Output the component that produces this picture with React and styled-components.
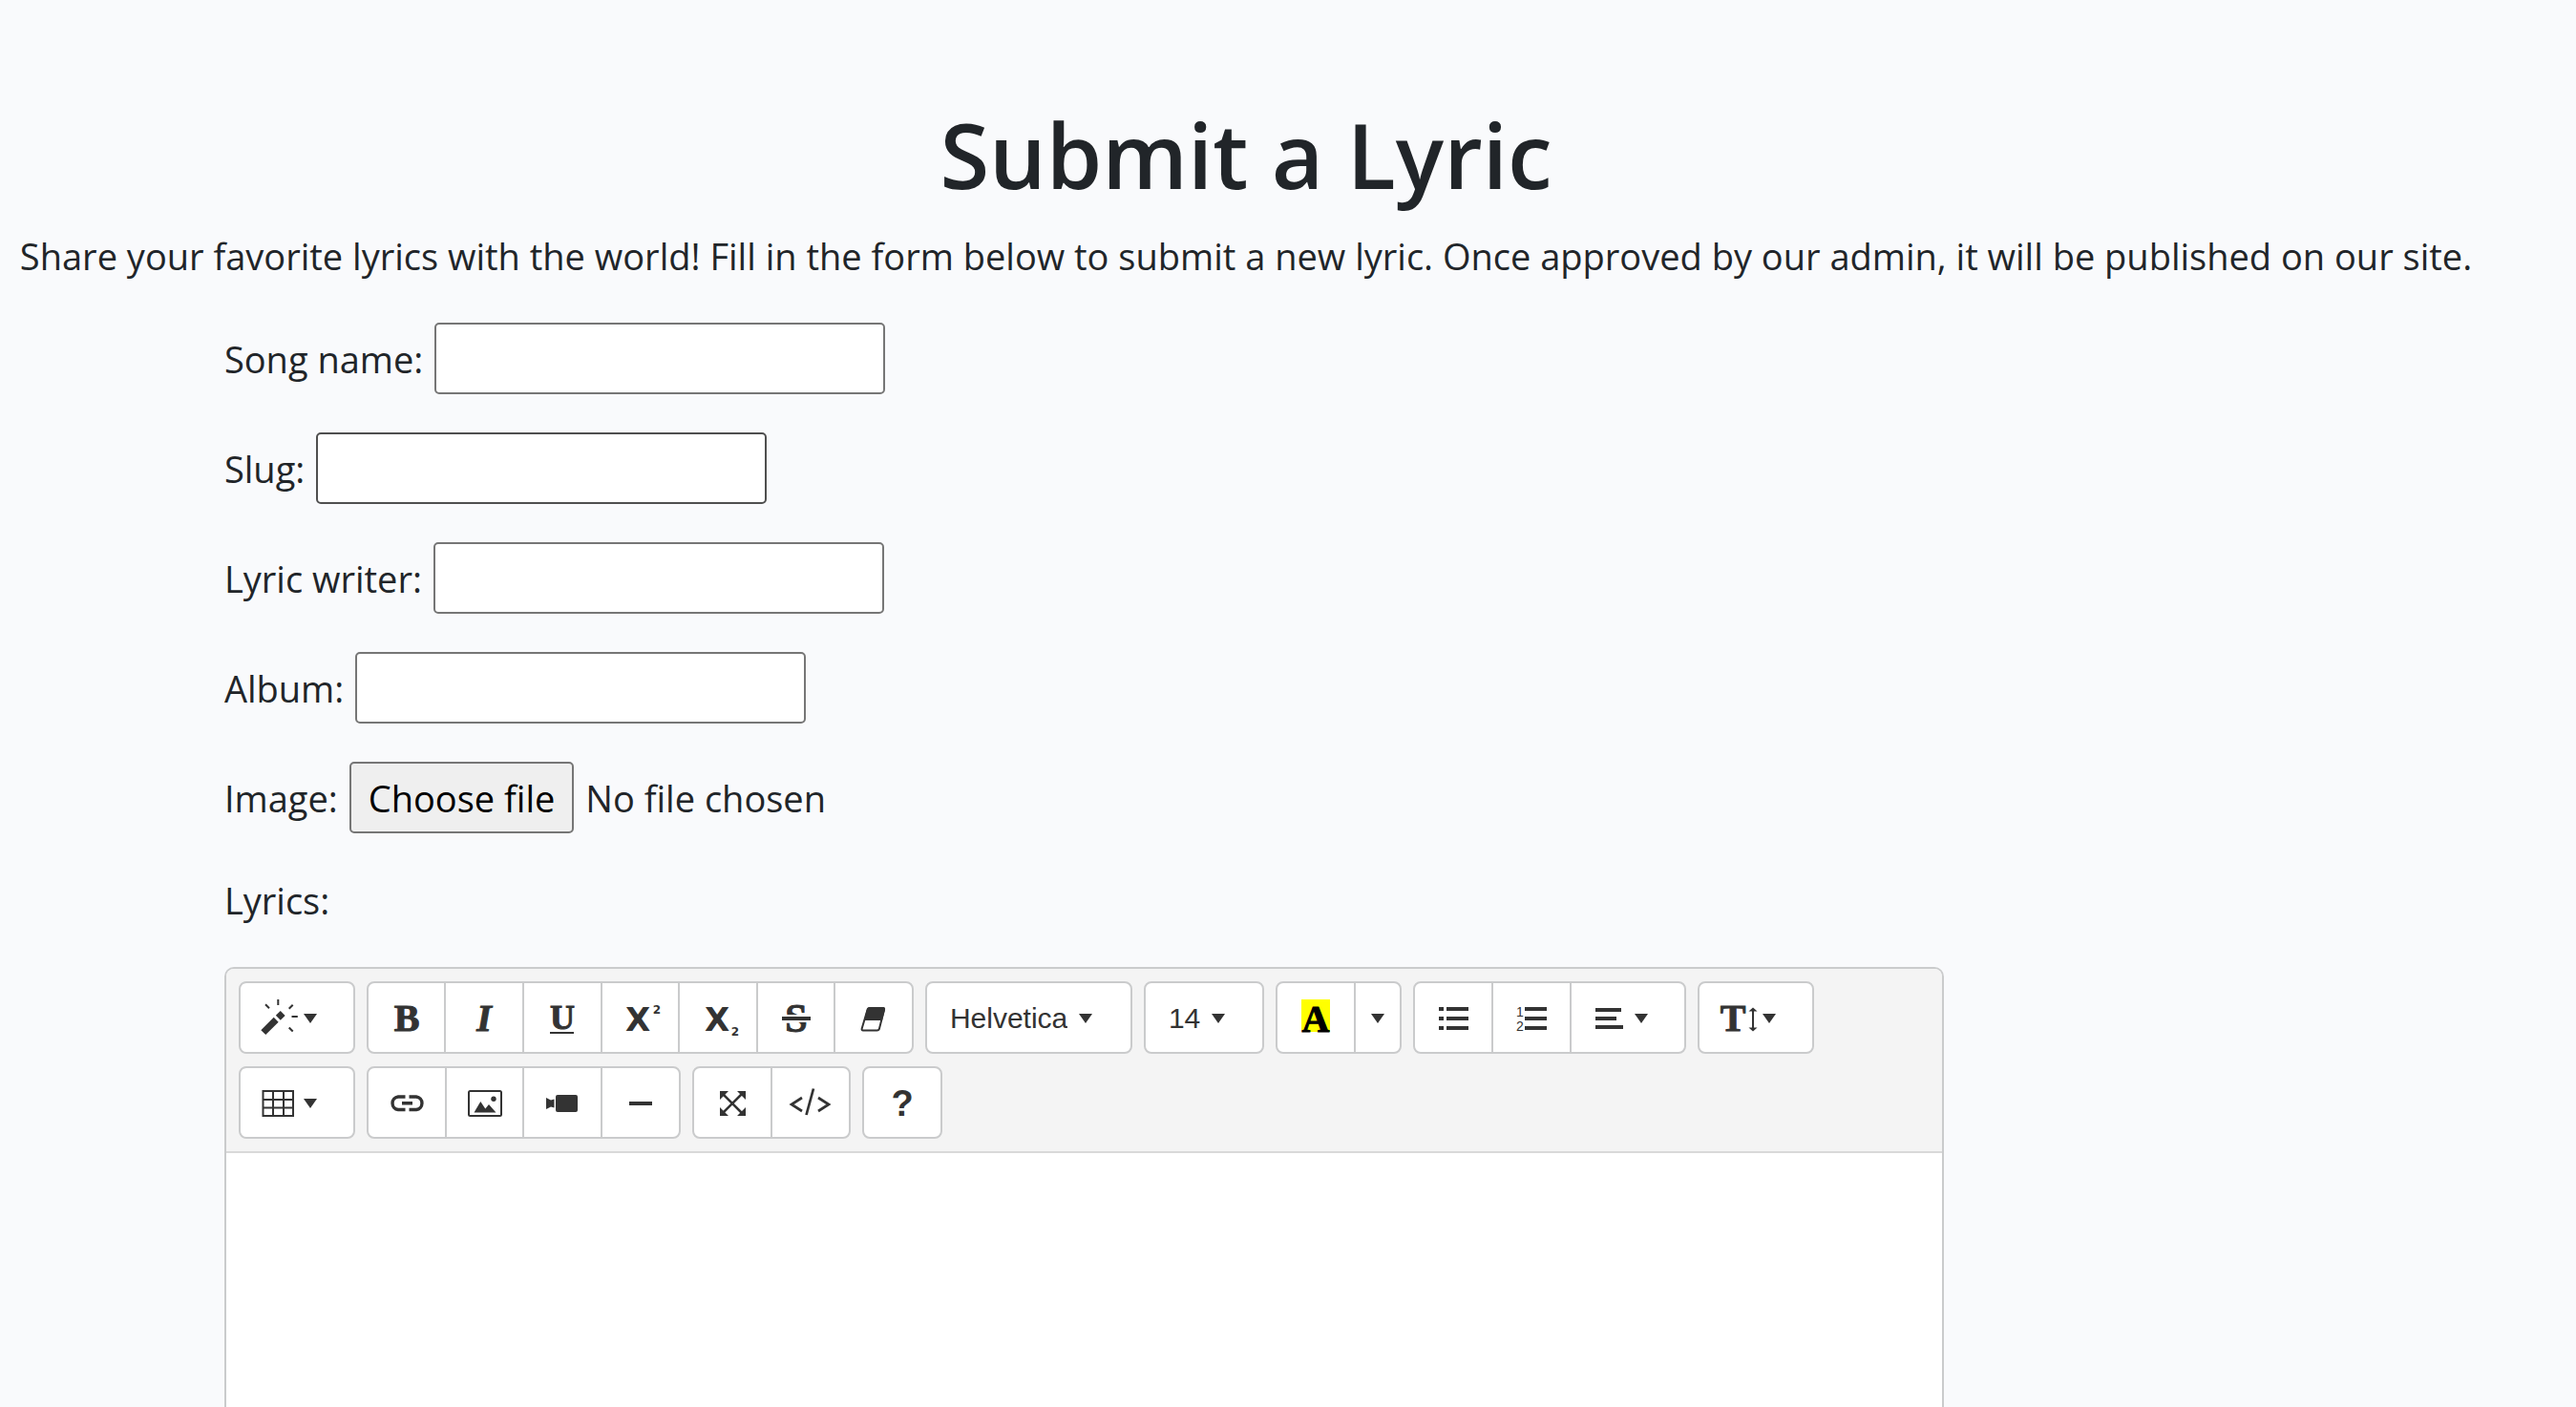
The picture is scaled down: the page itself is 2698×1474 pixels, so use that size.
import React from "react";
import styled, { createGlobalStyle, css } from "styled-components";

const ui = '"Open Sans", "Noto Sans", sans-serif';
const ink = "#333333";
const line = "#cacbcc";

const GlobalStyle = createGlobalStyle`
  *, *::before, *::after { box-sizing: border-box; }
  body {
    margin: 0;
    background: #f9fafc;
    color: #212529;
    font-family: ${ui};
    font-size: 38px;
    line-height: 60px;
  }
`;

const Page = styled.main`
  display: flex;
  flex-direction: column;
  min-height: 100vh;
  padding: 102px 88px 0 0;
`;

const Title = styled.h1`
  margin: 0 0 16px;
  font-size: 94px;
  font-weight: 600;
  line-height: 120px;
  text-align: center;
`;

const Intro = styled.p`
  margin: 0 0 40px;
  text-align: center;
`;

const Form = styled.form`
  display: flex;
  flex: 1;
  flex-direction: column;
  gap: 40px;
  width: 69%;
  margin-left: 9%;
`;

const Field = styled.div`
  display: flex;
  align-items: center;
  gap: 12px;
  position: relative;
`;

const control = css`
  height: 75px;
  border: 2px solid #767676;
  border-radius: 5px;
  font: inherit;
`;

const TextBox = styled.input`
  ${control}
  width: 472px;
  padding: 4px;
  background: #ffffff;
  border-color: ${(p) => (p.$strong ? "#4f4f4f" : "#767676")};
`;

const FileInput = styled.input`
  position: absolute;
  width: 1px;
  height: 1px;
  opacity: 0;
`;

const FileButton = styled.label`
  ${control}
  padding: 6px 18px;
  background: #efefef;
  color: #000000;
`;

const Editor = styled.div`
  display: flex;
  flex: 1;
  flex-direction: column;
  border: 2px solid ${line};
  border-bottom: 0;
  border-radius: 10px 10px 0 0;
  overflow: hidden;
`;

const Toolbar = styled.div`
  display: flex;
  flex-wrap: wrap;
  gap: 13px 12px;
  padding: 13px;
  background: #f4f4f4;
  border-bottom: 2px solid #d9d9d9;
`;

const Group = styled.div`
  display: flex;
  width: ${(p) => p.$width}px;
  height: 76px;
  border: 2px solid ${line};
  border-radius: 8px;
  background: #ffffff;
  overflow: hidden;
`;

const Tool = styled.button`
  display: flex;
  flex: ${(p) => (p.$width ? `0 0 ${p.$width}px` : "1")};
  align-items: center;
  justify-content: ${(p) => (p.$menu ? "flex-start" : "center")};
  gap: 4px;
  padding: 0 0 0 ${(p) => (p.$menu ? 18 : 0)}px;
  border: 0;
  background: transparent;
  color: ${ink};

  & + & {
    border-left: 2px solid ${line};
  }
`;

const Choice = styled.label`
  display: flex;
  flex: 1;
  align-items: center;
  gap: 12px;
  padding-left: 24px;
  color: ${ink};
`;

const Select = styled.select`
  appearance: none;
  field-sizing: content;
  padding: 0;
  border: 0;
  background: transparent;
  color: inherit;
  font: 30px "Liberation Sans", Arial, sans-serif;
`;

const Drawing = styled.svg`
  flex: none;
  display: block;
  width: ${(p) => p.$width || 48}px;
  height: 48px;
  fill: currentColor;
  overflow: visible;
`;

const CaretShape = styled.svg`
  flex: none;
  display: block;
  width: 14px;
  height: 12px;
  margin-top: 2px;
  fill: ${ink};
`;

const Glyph = styled.text`
  font-family: ${(p) => p.$family || '"Liberation Serif", serif'};
  font-size: ${(p) => p.$size || 40}px;
  font-weight: ${(p) => p.$weight || 700};
  font-style: ${(p) => (p.$italic ? "italic" : "normal")};
  stroke: ${(p) => (p.$family ? "none" : p.fill || ink)};
  text-anchor: middle;
`;

const Writing = styled.textarea`
  flex: 1;
  width: 100%;
  min-height: 240px;
  padding: 25px;
  border: 0;
  outline: 0;
  resize: none;
  background: #ffffff;
  font: inherit;
`;

const sans = '"DejaVu Sans", sans-serif';
const arial = '"Liberation Sans", Arial, sans-serif';

const Caret = () => (
  <CaretShape viewBox="0 0 14 12" aria-hidden="true">
    <path d="M0 1h14L7 11z" />
  </CaretShape>
);

const icons = {
  wand: (
    <g fill="none" stroke="currentColor">
      <path d="M5.8 39.6 19.2 26.2M21.3 24.2 26.2 19.4" strokeWidth="7" />
      <path d="M8 10.3l4 4M21.3 5v6M36.7 10.7l-4 4M35.5 23h6.3M32.7 34.5l4 4" strokeWidth="2" />
    </g>
  ),
  bold: <Glyph x="24" y="38">B</Glyph>,
  italic: <Glyph x="24" y="38" $italic>I</Glyph>,
  underline: (
    <>
      <Glyph x="24" y="36" $size={36}>U</Glyph>
      <path d="M11 39h25v2H11z" />
    </>
  ),
  superscript: (
    <>
      <Glyph x="22" y="38" $size={34} $family={sans}>X</Glyph>
      <Glyph x="42" y="20" $size={12} $family={sans}>2</Glyph>
    </>
  ),
  subscript: (
    <>
      <Glyph x="23" y="38" $size={34} $family={sans}>X</Glyph>
      <Glyph x="42" y="43" $size={12} $family={sans}>2</Glyph>
    </>
  ),
  strike: (
    <>
      <Glyph x="24" y="39" $size={42}>S</Glyph>
      <path d="M9 21h30v8H9z" fill="#ffffff" />
      <path d="M9 23h30v4H9z" />
    </>
  ),
  eraser: (
    <>
      <path
        d="M20 14h13.5q2 0 1.5 2l-5 19.500q-.5 2-2.500 2H13q-1.800 0-1.300-2L17.500 16q.5-2 2.500-2z"
        fill="none"
        stroke="currentColor"
        strokeWidth="2"
      />
      <path d="M19.500 13H34q2.500 0 2 2.500L33 27H14l2.800-11.500q.7-2.500 2.700-2.500z" />
    </>
  ),
  color: (
    <>
      <path d="M9 5h30v34H9z" fill="#ffff00" />
      <Glyph x="24" y="39" fill="#000000">A</Glyph>
    </>
  ),
  bullets: <path d="M9 13h5v4H9zM17 13h23v4H17zM9 23h5v4H9zM17 23h23v4H17zM9 33h5v4H9zM17 33h23v4H17z" />,
  numbers: (
    <>
      <Glyph x="12" y="23" $size={14} $weight={400} $family={arial}>1</Glyph>
      <Glyph x="12" y="38" $size={14} $weight={400} $family={arial}>2</Glyph>
      <path d="M17 13h23v4H17zM17 23h23v4H17zM17 33h23v4H17z" />
    </>
  ),
  align: <path d="M7 14h27v4H7zM7 23h22v4H7zM7 32h29v4H7z" />,
  height: (
    <>
      <Glyph x="17" y="38">T</Glyph>
      <path d="M37 16h2v20h-2z" />
      <path d="M38 13.500l4.500 4h-9zM38 38.500l4.500-4h-9z" />
    </>
  ),
  table: (
    <path
      d="M5.500 12h31.500v26H5.500zM16 12v26M27 12v26M5.500 21h31.500M5.500 29.500h31.500"
      fill="none"
      stroke="currentColor"
      strokeWidth="2"
    />
  ),
  link: (
    <path
      d="M22.500 18H15a6.800 6.800 0 0 0 0 13.500h7.500M26.500 18H34a6.800 6.800 0 0 1 0 13.500h-7.500M19 24.700h11"
      fill="none"
      stroke="currentColor"
      strokeWidth="3.400"
    />
  ),
  picture: (
    <>
      <rect x="7" y="12" width="34" height="26" rx="1.500" fill="none" stroke="currentColor" strokeWidth="2" />
      <path d="M12.500 34.500 19.300 23l5 7.500L28 26l7.500 8.500z" />
      <circle cx="33" cy="20.300" r="2.700" />
    </>
  ),
  video: (
    <>
      <rect x="17" y="16" width="23" height="18" rx="2" />
      <path d="M7 19l5 2.500 3.500-1V29.500l-3.500-1L7 31z" />
    </>
  ),
  rule: <path d="M12 23h24v4H12z" />,
  expand: (
    <>
      <path d="M13 14l22 22M35 14L13 36" stroke="currentColor" strokeWidth="2.500" />
      <path d="M11 12h9l-9 9zM38 12v9l-9-9zM11 38v-9l9 9zM38 38h-9l9-9z" />
    </>
  ),
  code: (
    <g fill="none" stroke="currentColor">
      <path d="M15 19 4 26l11 7M32 19l11 7-11 7" strokeWidth="2.700" />
      <path d="M19.500 37 27 9.500" strokeWidth="2.700" />
    </g>
  ),
  help: <Glyph x="24" y="38" $size={38} $family={arial}>?</Glyph>,
};

function ToolButton({ icon, label, menu, width }) {
  return (
    <Tool type="button" aria-label={label} aria-haspopup={menu ? "menu" : undefined} $menu={menu} $width={width}>
      {icon && (
        <Drawing $width={menu ? 44 : 48} viewBox={menu ? "0 0 44 48" : "0 0 48 48"} aria-hidden="true">
          {icons[icon]}
        </Drawing>
      )}
      {(menu || !icon) && <Caret />}
    </Tool>
  );
}

const fields = [
  { id: "song-name", label: "Song name:" },
  { id: "slug", label: "Slug:", strong: true },
  { id: "lyric-writer", label: "Lyric writer:" },
  { id: "album", label: "Album:" },
];

export default function App() {
  return (
    <>
      <GlobalStyle />
      <Page>
        <Title>Submit a Lyric</Title>
        <Intro>
          Share your favorite lyrics with the world! Fill in the form below to submit a new lyric. Once approved by our
          admin, it will be published on our site.
        </Intro>
        <Form>
          {fields.map((f) => (
            <Field key={f.id}>
              <label htmlFor={f.id}>{f.label}</label>
              <TextBox id={f.id} type="text" $strong={f.strong} />
            </Field>
          ))}
          <Field>
            <label htmlFor="image">Image:</label>
            <FileInput id="image" type="file" />
            <FileButton htmlFor="image">Choose file</FileButton>
            <span>No file chosen</span>
          </Field>
          <label htmlFor="lyrics">Lyrics:</label>
          <Editor>
            <Toolbar role="toolbar" aria-label="Formatting">
              <Group $width={122}>
                <ToolButton icon="wand" label="Style" menu />
              </Group>
              <Group $width={573}>
                <ToolButton icon="bold" label="Bold" />
                <ToolButton icon="italic" label="Italic" />
                <ToolButton icon="underline" label="Underline" />
                <ToolButton icon="superscript" label="Superscript" />
                <ToolButton icon="subscript" label="Subscript" />
                <ToolButton icon="strike" label="Strikethrough" />
                <ToolButton icon="eraser" label="Remove formatting" />
              </Group>
              <Group $width={217}>
                <Choice>
                  <Select aria-label="Font family" defaultValue="Helvetica">
                    <option>Helvetica</option>
                  </Select>
                  <Caret />
                </Choice>
              </Group>
              <Group $width={126}>
                <Choice>
                  <Select aria-label="Font size" defaultValue="14">
                    <option>14</option>
                  </Select>
                  <Caret />
                </Choice>
              </Group>
              <Group $width={132}>
                <ToolButton icon="color" label="Recent color" />
                <ToolButton label="More colors" width={48} />
              </Group>
              <Group $width={286}>
                <ToolButton icon="bullets" label="Unordered list" />
                <ToolButton icon="numbers" label="Ordered list" />
                <ToolButton icon="align" label="Paragraph" menu width={120} />
              </Group>
              <Group $width={122}>
                <ToolButton icon="height" label="Line height" menu />
              </Group>
              <Group $width={122}>
                <ToolButton icon="table" label="Table" menu />
              </Group>
              <Group $width={329}>
                <ToolButton icon="link" label="Link" />
                <ToolButton icon="picture" label="Picture" />
                <ToolButton icon="video" label="Video" />
                <ToolButton icon="rule" label="Horizontal rule" />
              </Group>
              <Group $width={166}>
                <ToolButton icon="expand" label="Full screen" />
                <ToolButton icon="code" label="Code view" />
              </Group>
              <Group $width={84}>
                <ToolButton icon="help" label="Help" />
              </Group>
            </Toolbar>
            <Writing id="lyrics" />
          </Editor>
        </Form>
      </Page>
    </>
  );
}
